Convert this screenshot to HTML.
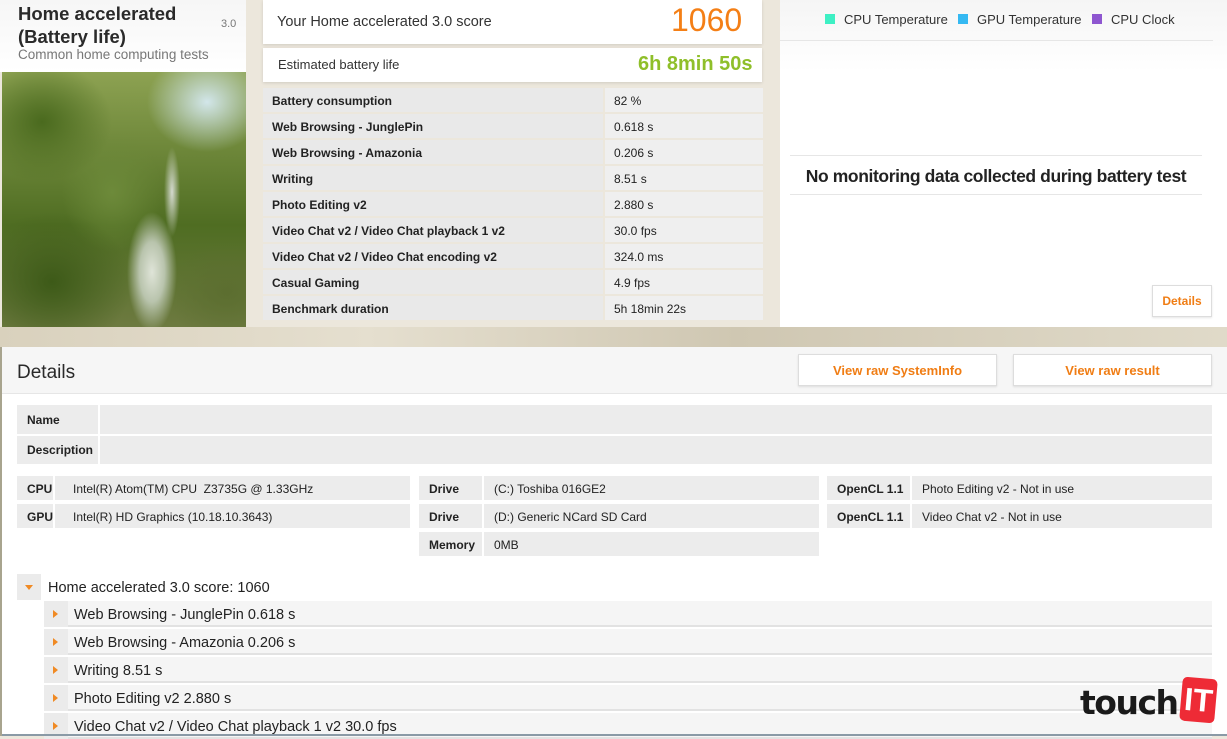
<!DOCTYPE html>
<html><head><meta charset="utf-8"><style>
*{box-sizing:border-box;margin:0;padding:0}
body{width:1227px;height:736px;overflow:hidden;background:#ece7dc;font-family:"Liberation Sans",sans-serif;position:relative;color:#222}
.a{position:absolute}
.row{position:absolute;left:263px;width:500px;height:24px;font-size:12px}
.row .l{position:absolute;left:0;width:340px;height:24px;background:#e9e9e9;font-weight:bold;padding:6px 9px}
.row .v{position:absolute;left:342px;width:158px;height:24px;background:#efefef;padding:6px 9px}
.c{position:absolute;height:24px;font-size:12px;padding:6px 10px;background:#ececec;white-space:nowrap}
.b{font-weight:bold}
.t{position:absolute;left:44px;width:1168px;height:26px;background:#f5f5f5;border-bottom:2px solid #e2e2e2;font-size:14.5px}
.t .ar{position:absolute;left:0;top:0;width:24px;height:26px;background:#ebebeb}
.t .ar:after{content:"";position:absolute;left:9px;top:9px;border-left:5px solid #f08a24;border-top:4px solid transparent;border-bottom:4px solid transparent}
.t span{position:absolute;left:30px;top:6px}
.btn{position:absolute;background:#fff;border:1px solid #ddd;color:#f07d14;font-weight:bold;font-size:13px;text-align:center;box-shadow:0 1px 2px rgba(0,0,0,.1)}
</style></head><body>
<div class="a" style="left:0;top:0;width:246px;height:72px;background:linear-gradient(#f6f6f6,#fff)"></div>
<div class="a" style="left:18px;top:2px;font-size:18.5px;font-weight:bold;line-height:23px;color:#2a2a2a">Home accelerated<br>(Battery life)</div>
<div class="a" style="left:221px;top:18px;font-size:11px;color:#777">3.0</div>
<div class="a" style="left:18px;top:47px;font-size:13.5px;color:#777">Common home computing tests</div>
<div class="a" style="left:2px;top:72px;width:244px;height:255px;background:
radial-gradient(ellipse 25px 60px at 150px 200px,#dfe4d8 0%,#b9c4ad 50%,transparent 100%),
radial-gradient(ellipse 8px 45px at 170px 120px,#d5dad0,transparent),
radial-gradient(ellipse 60px 50px at 205px 30px,#d2e6ea,transparent),
radial-gradient(ellipse 70px 60px at 40px 50px,#4a6a1e,transparent),
radial-gradient(ellipse 80px 70px at 50px 210px,#3d5a18,transparent),
radial-gradient(ellipse 60px 50px at 225px 220px,#5c6e30,transparent),
radial-gradient(ellipse 50px 60px at 110px 120px,#6d8a3a,transparent),
linear-gradient(#8da252,#4f6d22 60%,#6d7a40)"></div>
<div class="a" style="left:263px;top:0;width:499px;height:44px;background:#fff;box-shadow:0 1px 3px rgba(0,0,0,.12)"></div>
<div class="a" style="left:277px;top:14px;font-size:14.5px;color:#333">Your Home accelerated 3.0 score</div>
<div class="a" style="left:671px;top:2px;font-size:32px;color:#f47f16">1060</div>
<div class="a" style="left:263px;top:48px;width:499px;height:34px;background:#fff;box-shadow:0 1px 3px rgba(0,0,0,.12)"></div>
<div class="a" style="left:278px;top:57px;font-size:13px;color:#333">Estimated battery life</div>
<div class="a" style="left:638px;top:53px;font-size:20px;font-weight:bold;color:#8fbf2a">6h 8min 50s</div>
<div class="row" style="top:88px"><div class="l">Battery consumption</div><div class="v">82 %</div></div>
<div class="row" style="top:114px"><div class="l">Web Browsing - JunglePin</div><div class="v">0.618 s</div></div>
<div class="row" style="top:140px"><div class="l">Web Browsing - Amazonia</div><div class="v">0.206 s</div></div>
<div class="row" style="top:166px"><div class="l">Writing</div><div class="v">8.51 s</div></div>
<div class="row" style="top:192px"><div class="l">Photo Editing v2</div><div class="v">2.880 s</div></div>
<div class="row" style="top:218px"><div class="l">Video Chat v2 / Video Chat playback 1 v2</div><div class="v">30.0 fps</div></div>
<div class="row" style="top:244px"><div class="l">Video Chat v2 / Video Chat encoding v2</div><div class="v">324.0 ms</div></div>
<div class="row" style="top:270px"><div class="l">Casual Gaming</div><div class="v">4.9 fps</div></div>
<div class="row" style="top:296px"><div class="l">Benchmark duration</div><div class="v">5h 18min 22s</div></div>
<div class="a" style="left:780px;top:0;width:447px;height:327px;background:#fff"></div>
<div class="a" style="left:780px;top:0;width:447px;height:72px;background:linear-gradient(#f5f5f5,#fff)"></div>
<div class="a" style="left:780px;top:40px;width:433px;height:1px;background:#e6e6e6"></div>
<div class="a" style="left:825px;top:14px;width:10px;height:10px;background:#3ef0c4"></div>
<div class="a" style="left:844px;top:12px;font-size:13px;color:#333">CPU Temperature</div>
<div class="a" style="left:958px;top:14px;width:10px;height:10px;background:#35b9f2"></div>
<div class="a" style="left:977px;top:12px;font-size:13px;color:#333">GPU Temperature</div>
<div class="a" style="left:1092px;top:14px;width:10px;height:10px;background:#8e56d0"></div>
<div class="a" style="left:1111px;top:12px;font-size:13px;color:#333">CPU Clock</div>
<div class="a" style="left:790px;top:155px;width:412px;height:1px;background:#e6e6e6"></div>
<div class="a" style="left:790px;top:194px;width:412px;height:1px;background:#e6e6e6"></div>
<div class="a" style="left:790px;top:166px;width:412px;text-align:center;font-size:17.5px;font-weight:bold;color:#222;letter-spacing:-0.4px">No monitoring data collected during battery test</div>
<div class="btn" style="left:1152px;top:285px;width:60px;height:32px;font-size:12px;padding-top:8px">Details</div>
<div class="a" style="left:0;top:327px;width:1227px;height:20px;background:linear-gradient(90deg,#d9d1bd,#e5dfcf 30%,#cfc7b2 60%,#e0dac9)"></div>
<div class="a" style="left:2px;top:347px;width:1225px;height:389px;background:#fff"></div>
<div class="a" style="left:2px;top:347px;width:1225px;height:47px;background:#f6f6f6;border-bottom:1px solid #e6e6e6"></div>
<div class="a" style="left:17px;top:362px;font-size:19px;color:#2a2a2a">Details</div>
<div class="btn" style="left:798px;top:354px;width:199px;height:32px;padding-top:8px">View raw SystemInfo</div>
<div class="btn" style="left:1013px;top:354px;width:199px;height:32px;padding-top:8px">View raw result</div>
<div class="c b" style="left:17px;top:405px;width:81px;height:29px;padding-top:8px">Name</div>
<div class="c" style="left:100px;top:405px;width:1112px;height:29px"></div>
<div class="c b" style="left:17px;top:436px;width:81px;height:28px;padding-top:7px">Description</div>
<div class="c" style="left:100px;top:436px;width:1112px;height:28px"></div>
<div class="c b" style="left:17px;top:476px;width:36px">CPU</div>
<div class="c" style="left:55px;top:476px;width:355px;padding-left:18px">Intel(R) Atom(TM) CPU&nbsp; Z3735G @ 1.33GHz</div>
<div class="c b" style="left:17px;top:504px;width:36px">GPU</div>
<div class="c" style="left:55px;top:504px;width:355px;padding-left:18px">Intel(R) HD Graphics (10.18.10.3643)</div>
<div class="c b" style="left:419px;top:476px;width:63px">Drive</div>
<div class="c" style="left:484px;top:476px;width:335px">(C:) Toshiba 016GE2</div>
<div class="c b" style="left:419px;top:504px;width:63px">Drive</div>
<div class="c" style="left:484px;top:504px;width:335px">(D:) Generic NCard SD Card</div>
<div class="c b" style="left:419px;top:532px;width:63px">Memory</div>
<div class="c" style="left:484px;top:532px;width:335px">0MB</div>
<div class="c b" style="left:827px;top:476px;width:83px">OpenCL 1.1</div>
<div class="c" style="left:912px;top:476px;width:300px">Photo Editing v2 - Not in use</div>
<div class="c b" style="left:827px;top:504px;width:83px">OpenCL 1.1</div>
<div class="c" style="left:912px;top:504px;width:300px">Video Chat v2 - Not in use</div>
<div class="a" style="left:17px;top:574px;width:24px;height:26px;background:#ebebeb"></div>
<div class="a" style="left:25px;top:585px;border-top:5px solid #f08a24;border-left:4px solid transparent;border-right:4px solid transparent"></div>
<div class="a" style="left:48px;top:580px;font-size:14.5px">Home accelerated 3.0 score: 1060</div>
<div class="t" style="top:601px"><div class="ar"></div><span>Web Browsing - JunglePin 0.618 s</span></div>
<div class="t" style="top:629px"><div class="ar"></div><span>Web Browsing - Amazonia 0.206 s</span></div>
<div class="t" style="top:657px"><div class="ar"></div><span>Writing 8.51 s</span></div>
<div class="t" style="top:685px"><div class="ar"></div><span>Photo Editing v2 2.880 s</span></div>
<div class="t" style="top:713px"><div class="ar"></div><span>Video Chat v2 / Video Chat playback 1 v2 30.0 fps</span></div>
<div class="a" style="left:1080px;top:683px;font-size:33px;font-weight:bold;font-family:'DejaVu Sans',sans-serif;color:#1a1a1a;letter-spacing:-1.5px">touch</div>
<div class="a" style="left:1181px;top:678px;width:35px;height:44px;background:#ee2b36;border-radius:5px;transform:rotate(5deg);color:#fff;font-size:32px;font-weight:bold;text-align:center;line-height:44px">IT</div>
<div class="a" style="left:0;top:734px;width:1227px;height:2px;background:#8a9aa6"></div>
<div class="a" style="left:0;top:347px;width:2px;height:389px;background:#a8a48e"></div>
</body></html>
